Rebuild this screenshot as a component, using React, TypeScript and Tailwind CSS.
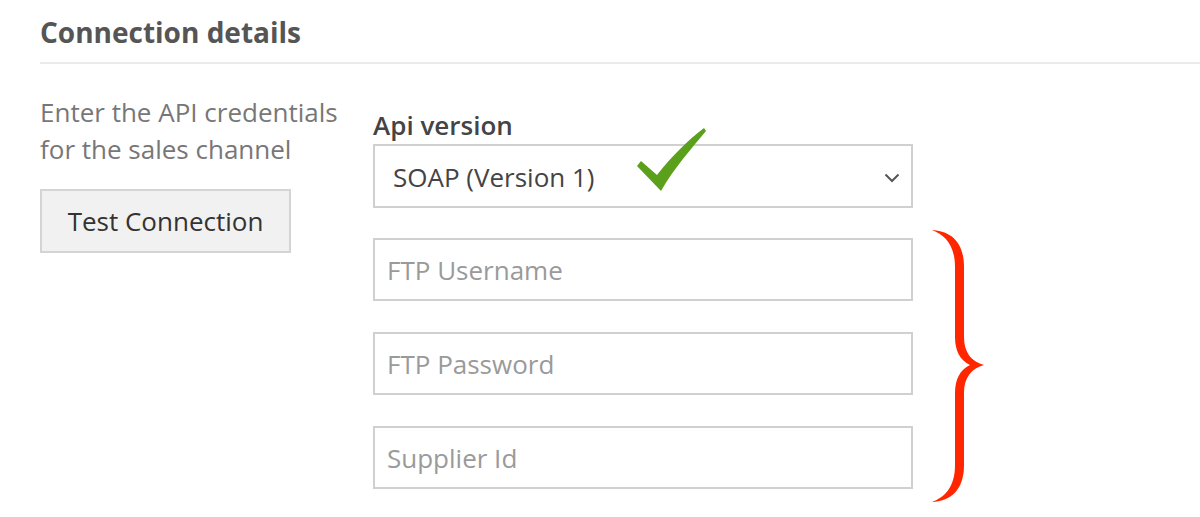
import React from 'react';

const font = { fontFamily: '"Open Sans", "Liberation Sans", sans-serif' };

const TextField = ({ placeholder }: { placeholder: string }) => (
  <input
    type="text"
    placeholder={placeholder}
    className="w-[540px] h-[63px] border-2 border-[#d0d0d0] bg-white px-[12px] text-[26px] text-[#444] placeholder:text-[#9a9a9a] outline-none"
    style={font}
  />
);

const Brace = () => (
  <svg width="56" height="275" viewBox="0 0 56 275" className="shrink-0 -mt-[9px] ml-[17px]">
    <path
      d="M2 1 C20 2 34 12 34 38 L34 108 C34 124 42 133 54 136 C42 139 34 148 34 164 L34 236 C34 262 20 272 2 273 C15 268 25 258 25 236 L25 164 C25 150 30 141 40 136 C30 131 25 122 25 108 L25 38 C25 16 15 6 2 1 Z"
      fill="#ff2600"
    />
  </svg>
);

// green tick painted over the select box
const Check = () => (
  <svg width="90" height="80" viewBox="0 0 90 80" className="absolute left-[245px] top-[-26px]">
    <path d="M17 46 L21 41 L37 55 C52 36 68 20 84 8 L86 11 C72 28 54 48 41 71 Z" fill="#5aa01a" />
  </svg>
);

export default function App() {
  return (
    <div className="w-[1200px] h-[517px] bg-white overflow-hidden" style={font}>
      <div className="pl-[40px] pt-[12px]">
        <h2 className="text-[28px] leading-[40px] font-bold text-[#555]">Connection details</h2>
        <div className="mt-[10px] h-[2px] bg-[#ebebeb]" />

        <div className="flex mt-[30px]">
          <div className="w-[333px] shrink-0">
            <p className="text-[26px] leading-[37px] text-[#777]">
              Enter the API credentials
              <br />
              for the sales channel
            </p>
            <button className="mt-[21px] w-[251px] h-[64px] border-2 border-[#d4d4d4] bg-[#f1f1f1] text-[26px] text-[#333]">
              Test Connection
            </button>
          </div>

          <div className="pt-[17px]">
            <div className="text-[26px] leading-[28px] font-semibold text-[#444]">Api version</div>
            <div className="relative mt-[5px] w-[540px] h-[64px] border-2 border-[#d0d0d0] bg-white flex items-center pl-[18px] pr-[10px] pt-[3px]">
              <span className="text-[26px] text-[#444]">SOAP (Version 1)</span>
              <svg width="16" height="10" viewBox="0 0 16 10" className="ml-auto mr-[1px]">
                <polyline points="1.5,1.5 8,8 14.5,1.5" fill="none" stroke="#555" strokeWidth="2" />
              </svg>
              <Check />
            </div>

            <div className="flex mt-[30px]">
              <div className="flex flex-col gap-[31px]">
                <TextField placeholder="FTP Username" />
                <TextField placeholder="FTP Password" />
                <TextField placeholder="Supplier Id" />
              </div>
              <Brace />
            </div>
          </div>
        </div>
      </div>
    </div>
  );
}
